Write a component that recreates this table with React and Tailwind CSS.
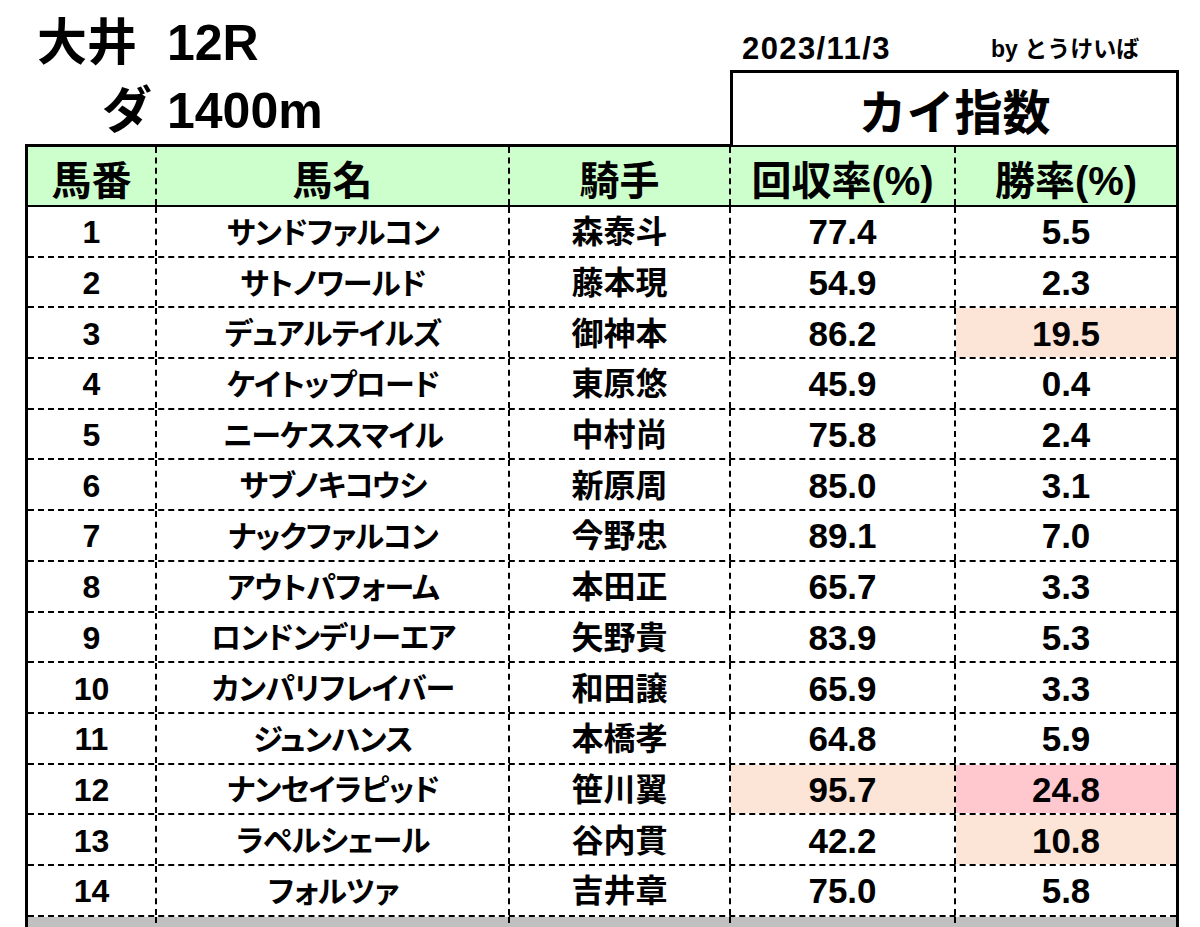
import React from "react";

const rows = [
  ["1", "サンドファルコン", "森泰斗", "77.4", "5.5", "", ""],
  ["2", "サトノワールド", "藤本現", "54.9", "2.3", "", ""],
  ["3", "デュアルテイルズ", "御神本", "86.2", "19.5", "", "peach"],
  ["4", "ケイトップロード", "東原悠", "45.9", "0.4", "", ""],
  ["5", "ニーケススマイル", "中村尚", "75.8", "2.4", "", ""],
  ["6", "サブノキコウシ", "新原周", "85.0", "3.1", "", ""],
  ["7", "ナックファルコン", "今野忠", "89.1", "7.0", "", ""],
  ["8", "アウトパフォーム", "本田正", "65.7", "3.3", "", ""],
  ["9", "ロンドンデリーエア", "矢野貴", "83.9", "5.3", "", ""],
  ["10", "カンパリフレイバー", "和田譲", "65.9", "3.3", "", ""],
  ["11", "ジュンハンス", "本橋孝", "64.8", "5.9", "", ""],
  ["12", "ナンセイラピッド", "笹川翼", "95.7", "24.8", "peach", "pink"],
  ["13", "ラペルシェール", "谷内貫", "42.2", "10.8", "", "peach"],
  ["14", "フォルツァ", "吉井章", "75.0", "5.8", "", ""],
];

const bg = (k) =>
  k === "peach" ? "bg-[#fce4d6]" : k === "pink" ? "bg-[#ffc7ce]" : "bg-white";

const cell =
  "flex items-center justify-center border-r-2 border-dashed border-black";
const lastCell = "flex items-center justify-center";

export default function App() {
  return (
    <div className="w-[1200px] h-[927px] overflow-hidden bg-white text-black font-['Liberation_Sans','Noto_Sans_CJK_JP',sans-serif]">
      {/* top area */}
      <div className="flex pl-[25px] h-[147px]">
        <div className="w-[705px] border-b-[3px] border-black pt-[9px]">
          <div className="grid grid-cols-[142px_1fr] text-[50px] leading-[68px] font-bold">
            <div className="pl-[12px]">大井</div>
            <div>12R</div>
            <div className="pl-[77px]">ダ</div>
            <div>1400m</div>
          </div>
        </div>
        <div className="w-[449px] flex flex-col">
          <div className="h-[70px] flex items-start pt-[34px] leading-[30px]">
            <div className="w-[261px] pl-[12px] text-[31px] font-bold tracking-[1.4px]">
              2023/11/3
            </div>
            <div className="text-[23px] font-semibold">by とうけいば</div>
          </div>
          <div className="flex-1 border-[3px] border-b-2 border-black flex items-center justify-center pt-[9px]">
            <span className="text-[48px] leading-[48px] font-bold">カイ指数</span>
          </div>
        </div>
      </div>

      {/* table */}
      <div className="ml-[25px] w-[1154px] border-l-[3px] border-r-[3px] border-black">
        <div className="grid grid-cols-[129px_353px_221px_225px_220px] h-[60px] bg-[#ccffcc] border-b-2 border-black text-[40px] leading-[40px] font-bold">
          <div className={cell + " pt-[10px]"}>馬番</div>
          <div className={cell + " pt-[10px]"}>馬名</div>
          <div className={cell + " pt-[10px]"}>騎手</div>
          <div className={cell + " pt-[10px]"}>回収率(%)</div>
          <div className={lastCell + " pt-[10px]"}>勝率(%)</div>
        </div>
        {rows.map((r) => (
          <div
            key={r[0]}
            className="grid grid-cols-[129px_353px_221px_225px_220px] h-[50.7px] border-b-2 border-dashed border-black text-[32px] leading-[32px] font-bold"
          >
            <div className={cell + " pt-[2px]"}>{r[0]}</div>
            <div className={cell + " pt-[3px] pl-[1px] text-[30px] tracking-[-0.8px] [font-feature-settings:'palt']"}>{r[1]}</div>
            <div className={cell + " pt-[2px]"}>{r[2]}</div>
            <div className={cell + " pt-[2px] text-[35px] " + bg(r[5])}>{r[3]}</div>
            <div className={lastCell + " pt-[2px] text-[35px] " + bg(r[6])}>{r[4]}</div>
          </div>
        ))}
        <div className="grid grid-cols-[129px_353px_221px_225px_220px] h-[60px] bg-[#c0c0c0]">
          <div className={cell}></div>
          <div className={cell}></div>
          <div className={cell}></div>
          <div className={cell}></div>
          <div className={lastCell}></div>
        </div>
      </div>
    </div>
  );
}
